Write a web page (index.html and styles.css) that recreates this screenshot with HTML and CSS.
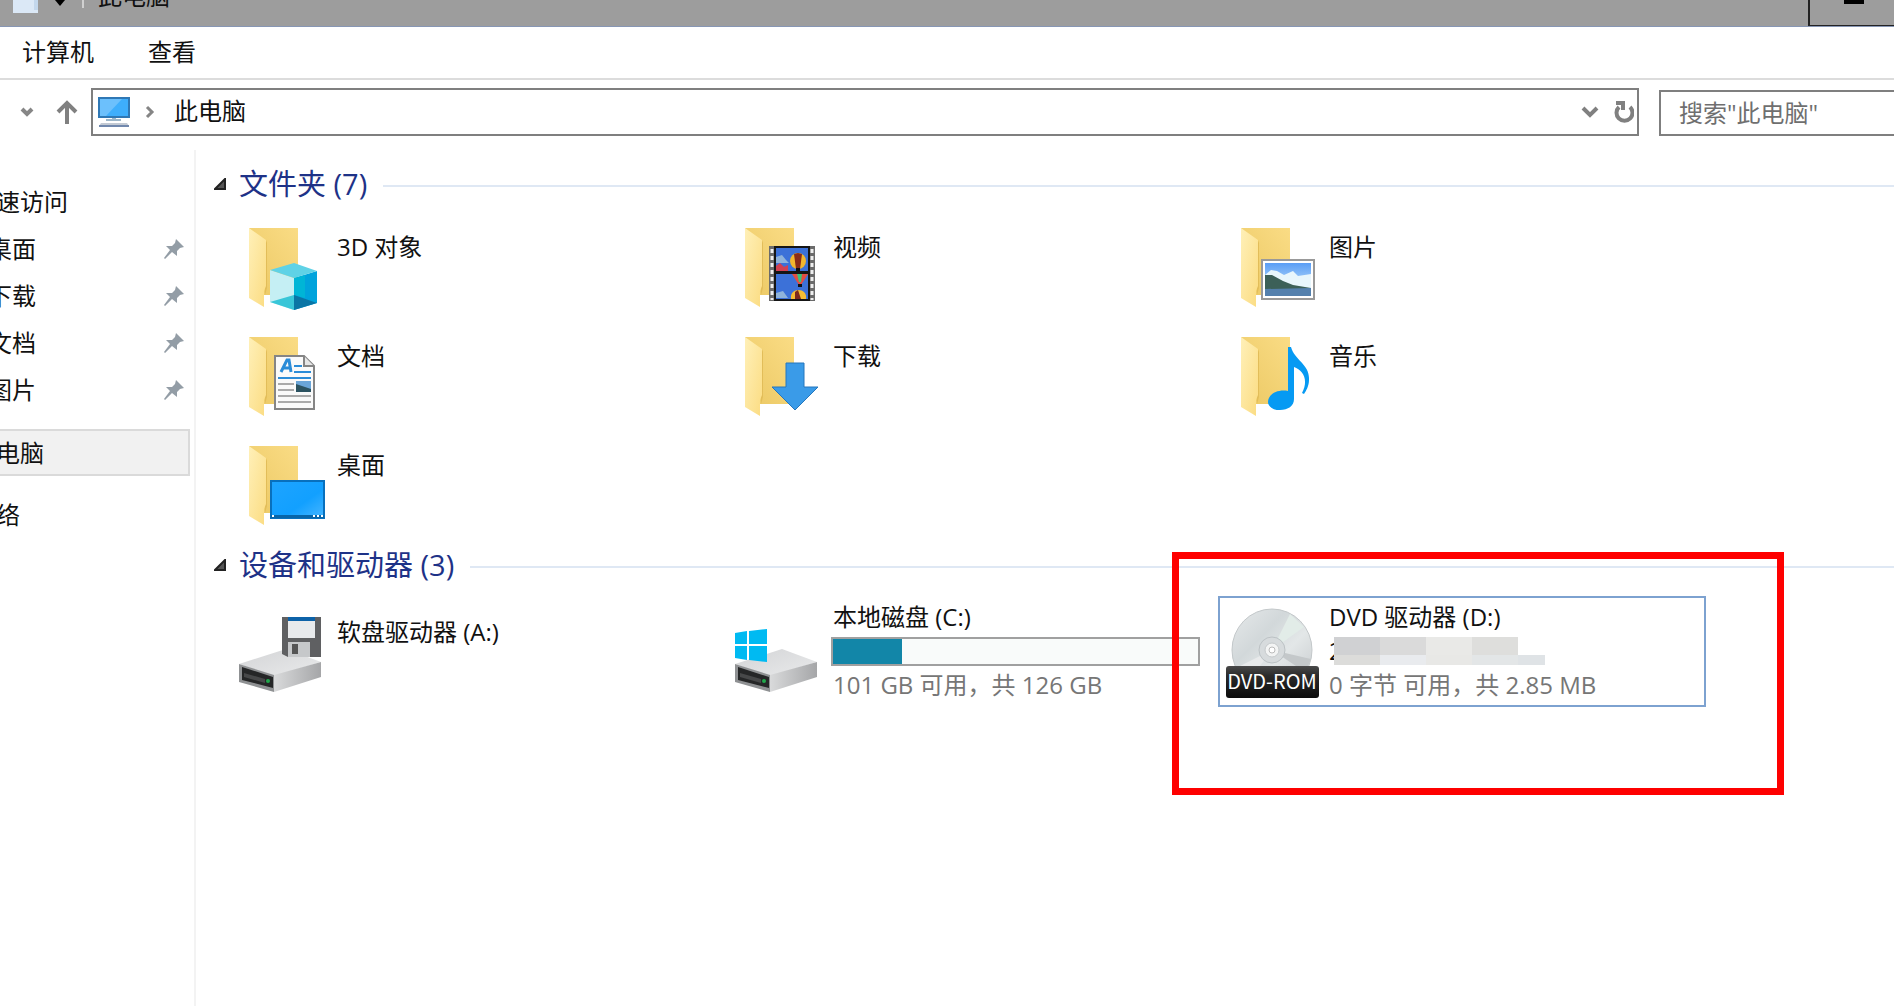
FILE: index.html
```html
<!DOCTYPE html>
<html lang="zh-CN">
<head>
<meta charset="utf-8">
<title>此电脑</title>
<link rel="stylesheet" href="styles.css">
</head>
<body>
<svg class="defs" aria-hidden="true">
  <defs>
    <linearGradient id="back" x1="0" y1="1" x2="1" y2="0"><stop offset="0" stop-color="#ebc863"/><stop offset="1" stop-color="#fadc85"/></linearGradient>
    <linearGradient id="flap" x1="0" y1="0" x2="1" y2="1"><stop offset="0" stop-color="#fff0b8"/><stop offset="1" stop-color="#fbdc82"/></linearGradient>
    <linearGradient id="top" x1="0" y1="0" x2="1" y2="1"><stop offset="0" stop-color="#d3d4d6"/><stop offset="1" stop-color="#e9eaeb"/></linearGradient>
    <linearGradient id="side" x1="0" y1="0" x2="1" y2="0"><stop offset="0" stop-color="#d9dadb"/><stop offset="1" stop-color="#a5a6a8"/></linearGradient>
    <linearGradient id="screen" x1="0" y1="0" x2="1" y2="1"><stop offset="0" stop-color="#1ea4ff"/><stop offset=".6" stop-color="#12a0ff"/><stop offset="1" stop-color="#48b6ff"/></linearGradient>
    <linearGradient id="disc" x1="0" y1="0" x2="1" y2="1"><stop offset="0" stop-color="#e6e9ea"/><stop offset=".35" stop-color="#d2d8da"/><stop offset=".6" stop-color="#e3e7e8"/><stop offset="1" stop-color="#c3c7c9"/></linearGradient>
    <linearGradient id="label" x1="0" y1="0" x2="0" y2="1"><stop offset="0" stop-color="#4a4a4a"/><stop offset=".3" stop-color="#2b2b2b"/><stop offset="1" stop-color="#0c0c0c"/></linearGradient>
    <linearGradient id="sky" x1="0" y1="0" x2="0" y2="1"><stop offset="0" stop-color="#5a9ef5"/><stop offset="1" stop-color="#d8f0fb"/></linearGradient>
    <symbol id="folder" viewBox="0 0 110 109">
      <path d="M23 10H72V77H38Z" fill="url(#back)"/>
      <path d="M40 22L41 25V70L39 77V60Z" fill="#e2bd59"/>
      <path d="M23 10L40 22V68L38 73V89L23 80Z" fill="url(#flap)"/>
    </symbol>
    <symbol id="drive" viewBox="0 0 110 109">
      <path d="M13 68L60 53L95 66L48 80Z" fill="url(#top)"/>
      <path d="M48 79L95 66V81L48 96Z" fill="url(#side)"/>
      <path d="M13 68L48 79V96L13 86Z" fill="#8f9193"/>
      <path d="M16 71L47 81V92L16 84Z" fill="#252627"/>
      <path d="M18 77L39 83V87L18 81Z" fill="#474849"/>
      <circle cx="42" cy="85" r="2" fill="#20a84b"/>
    </symbol>
    <symbol id="pin" viewBox="0 0 20 20">
      <path d="M12 0L20 8L16 9L13 12V17L8 13L1 20L0 19L6 11L2 7H8L11 4Z" fill="#939da6"/>
    </symbol>
  </defs>
</svg>

<header class="titlebar">
  <svg class="title-icon" viewBox="0 0 84 14" aria-hidden="true">
    <path d="M13 0H38V13H13Z" fill="#dbe8f6"/><path d="M34 0H38V10H34Z" fill="#c3d7ec"/>
    <path d="M55 0H65L60 6Z" fill="#000"/><path d="M83 0V8" stroke="#d0d0d0" stroke-width="2"/>
  </svg>
  <h1 class="title">此电脑</h1>
  <button class="minimize" aria-label="最小化"></button>
</header>

<nav class="menu">
  <a href="#computer">计算机</a>
  <a href="#view">查看</a>
</nav>

<div class="toolbar">
  <button class="recent" aria-label="最近"><svg width="14" height="10" viewBox="0 0 14 10"><path d="M2 2L7 7L12 2" fill="none" stroke="#868686" stroke-width="4"/></svg></button>
  <button class="up" aria-label="向上"><svg width="22" height="24" viewBox="0 0 22 24"><path d="M11 24V3M2 12L11 3L20 12" fill="none" stroke="#808080" stroke-width="4"/></svg></button>
  <div class="address">
    <svg width="32" height="32" viewBox="0 0 32 32" aria-hidden="true">
      <path d="M1 2H31V21H1Z" fill="#3eaefc" stroke="#2f78b5" stroke-width="2"/><path d="M2 3H24L8 20H2Z" fill="#6cc0fc"/>
      <path d="M14 22H18V23H23V25H8V23H14Z" fill="#9cb6c9"/><path d="M3 27H29L31 30H1Z" fill="#c3cad4"/><path d="M1 30H31" stroke="#7188ad" stroke-width="2"/>
    </svg>
    <svg class="crumb" width="10" height="14" viewBox="0 0 10 14" aria-hidden="true"><path d="M2 2L7 7L2 12" fill="none" stroke="#858585" stroke-width="3"/></svg>
    <span class="path">此电脑</span>
    <button aria-label="以前的位置"><svg width="18" height="12" viewBox="0 0 18 12"><path d="M2 2L9 9L16 2" fill="none" stroke="#808080" stroke-width="4"/></svg></button>
    <button aria-label="刷新"><svg width="20" height="22" viewBox="0 0 20 22"><path d="M5 6A8 8 0 1 0 16 6M2 2H9V9" fill="none" stroke="#808080" stroke-width="4"/></svg></button>
  </div>
  <input class="search" type="search" aria-label="搜索" placeholder='搜索"此电脑"'>
</div>

<div class="body">
  <nav class="sidebar">
    <a class="root" href="#quick">速访问</a>
    <a href="#desktop">桌面<svg><use href="#pin"/></svg></a>
    <a href="#downloads">下载<svg><use href="#pin"/></svg></a>
    <a href="#documents">文档<svg><use href="#pin"/></svg></a>
    <a href="#pictures">图片<svg><use href="#pin"/></svg></a>
    <a class="root current" href="#pc">电脑</a>
    <a class="root" href="#network">络</a>
  </nav>

  <main class="content">
    <section>
      <h2 class="group"><svg width="12" height="12" viewBox="0 0 12 12" aria-hidden="true"><path d="M1 11H11V1Z" fill="#555" stroke="#222" stroke-width="2"/></svg><span>文件夹 (7)</span></h2>
      <div class="grid">
        <a class="tile" href="#objects">
          <svg viewBox="0 0 110 109" aria-hidden="true"><use href="#folder"/>
            <path d="M44 52L68 60V92L44 84Z" fill="#c5eff4"/><path d="M68 60L91 53V85L68 92Z" fill="#00a3dc"/><path d="M68 60L79 57V80L68 77Z" fill="#00b5d6"/>
            <path d="M44 52L68 45L91 53L68 60Z" fill="#5fd2e6"/><path d="M44 84L68 77V92Z" fill="#39c6d8"/><path d="M68 77L91 85L68 92Z" fill="#0a75a5"/>
          </svg><span class="name">3D 对象</span></a>
        <a class="tile" href="#videos">
          <svg viewBox="0 0 110 109" aria-hidden="true"><use href="#folder"/>
            <path d="M47 28H93V83H47Z" fill="#6b6b6b"/><path d="M52 28H88V83H52Z" fill="#151515"/>
            <path d="M50 31V82M90 31V82" stroke="#eee" stroke-width="3" stroke-dasharray="4 3"/>
            <path d="M54 30H86V53H54ZM54 56H86V81H54Z" fill="#3c71d8"/>
            <path d="M54 39L60 37L64 42L67 45H54ZM54 75L61 73L66 80H54Z" fill="#8fb3da"/><path d="M54 48L58 45L62 49L66 47V53H54Z" fill="#d34152"/>
            <circle cx="76" cy="43" r="8" fill="#f3b72e"/><path d="M72 36L74 51H78L80 36L76 35Z" fill="#8a2c18"/><path d="M74 50H78V54H74Z" fill="#111"/>
            <path d="M70 56H86L79 67H77Z" fill="#e34d42"/><path d="M75 56H80L79 64H77Z" fill="#3bc37a"/><path d="M76 66H80V69H76Z" fill="#111"/>
            <path d="M69 81C67 69 86 69 84 81Z" fill="#f5bd33"/><path d="M73 81V74L76 72L79 81Z" fill="#7c2a1d"/>
          </svg><span class="name">视频</span></a>
        <a class="tile" href="#pictures">
          <svg viewBox="0 0 110 109" aria-hidden="true"><use href="#folder"/>
            <path d="M44 42H96V81H44Z" fill="#fff" stroke="#999" stroke-width="2"/><path d="M47 45H93V78H47Z" fill="url(#sky)"/>
            <path d="M47 57L53 52L59 53L66 57L75 53L80 58L93 56V71H47Z" fill="#e8f6fc"/>
            <path d="M47 57L54 57L65 63L75 67L93 70V73H47Z" fill="#3c6058"/><path d="M47 71L93 70V78H47Z" fill="#5480ad"/>
          </svg><span class="name">图片</span></a>
        <a class="tile" href="#documents">
          <svg viewBox="0 0 110 109" aria-hidden="true"><use href="#folder"/>
            <path d="M49 29H78L88 39V82H49Z" fill="#fafafa" stroke="#858585" stroke-width="2"/><path d="M78 29V39H88" fill="#e6e6e6" stroke="#858585" stroke-width="2"/>
            <path d="M55 45L61 33H63L65 45M58 41H64" fill="none" stroke="#2b8cd8" stroke-width="3"/>
            <path d="M68 39H76M68 45H85M52 51H85" stroke="#2b8cd8" stroke-width="2"/><path d="M52 57H68M52 63H68M52 69H85M52 75H85" stroke="#aaa" stroke-width="2"/>
            <path d="M70 54H85V65H70Z" fill="#6aa5d8"/><path d="M70 57L85 62V65H70Z" fill="#2c5361"/>
          </svg><span class="name">文档</span></a>
        <a class="tile" href="#downloads">
          <svg viewBox="0 0 110 109" aria-hidden="true"><use href="#folder"/>
            <path d="M64 36H82V60H96L73 83L50 60H64Z" fill="#3a9be8" stroke="#2477bd"/>
          </svg><span class="name">下载</span></a>
        <a class="tile" href="#music">
          <svg viewBox="0 0 110 109" aria-hidden="true"><use href="#folder"/>
            <path d="M70 20H73C77 34 92 37 91 53C91 59 88 64 86 67L84 66C91 53 85 43 76 40V72C76 79 70 83 62 83C54 83 50 79 50 75C50 67 60 62 70 64Z" fill="#069af3"/>
          </svg><span class="name">音乐</span></a>
        <a class="tile" href="#desktop">
          <svg viewBox="0 0 110 109" aria-hidden="true"><use href="#folder"/>
            <path d="M45 45H98V82H45Z" fill="url(#screen)" stroke="#0870bd" stroke-width="2"/><path d="M45 79H98V82H45Z" fill="#0865a8"/>
            <path d="M46 80H48M87 80H89M91 80H93M95 80H97" stroke="#fff" stroke-width="2"/>
          </svg><span class="name">桌面</span></a>
      </div>
    </section>

    <section>
      <h2 class="group"><svg width="12" height="12" viewBox="0 0 12 12" aria-hidden="true"><path d="M1 11H11V1Z" fill="#555" stroke="#222" stroke-width="2"/></svg><span>设备和驱动器 (3)</span></h2>
      <div class="grid devices">
        <a class="tile" href="#a">
          <svg viewBox="0 0 110 109" aria-hidden="true"><use href="#drive"/>
            <path d="M56 21H95V61H62L56 58Z" fill="#5f6062"/><path d="M62 21H89V25H62Z" fill="#0d62a8"/><path d="M62 25H89V42H62Z" fill="#e8eaec"/>
            <path d="M62 46H84V61H62Z" fill="#c6c8ca"/><path d="M66 48H72V58H66Z" fill="#555"/>
          </svg><span class="name floppy">软盘驱动器 (A:)</span></a>
        <a class="tile" href="#c">
          <svg viewBox="0 0 110 109" aria-hidden="true"><use href="#drive"/>
            <path d="M13 37L25 35V48H13ZM27 35L45 33V48H27ZM13 50H25V64L13 62ZM27 50H45V66L27 64Z" fill="#00baf2"/>
          </svg>
          <span class="info"><span>本地磁盘 (C:)</span><progress max="100" value="19" aria-label="已用空间"></progress><span class="sub">101 GB 可用，共 126 GB</span></span></a>
        <a class="tile selected" href="#d">
          <svg viewBox="0 0 110 109" aria-hidden="true">
            <ellipse cx="54" cy="54" rx="40" ry="41" fill="url(#disc)" stroke="#c3c8ca"/>
            <path d="M54 54L72 18L86 31Z" fill="#e2ece8"/><path d="M54 54L18 72L30 86Z" fill="#e8eaeb"/><path d="M54 54L93 63L87 76Z" fill="#c4c8ca"/>
            <circle cx="54" cy="54" r="13" fill="#d7dbdd" stroke="#bcc2c5"/><circle cx="54" cy="54" r="7" fill="#f3f4f4" stroke="#c5c9cb"/><circle cx="54" cy="54" r="3" fill="#fff" stroke="#bbb"/>
            <rect x="8" y="70" width="93" height="32" rx="3" fill="url(#label)"/>
            <text class="rom" x="54" y="93" text-anchor="middle">DVD-ROM</text>
          </svg>
          <span class="info"><span>DVD 驱动器 (D:)</span>
            <span class="volume">2<span class="mosaic"><i></i><i></i><i></i><i></i><i></i><i></i><i></i><i></i><i></i></span></span>
            <span class="sub">0 字节 可用，共 2.85 MB</span></span>
          <span class="callout"></span></a>
      </div>
    </section>
  </main>
</div>
</body>
</html>
```
FILE: styles.css
```css
* { box-sizing: border-box; }

body {
  margin: 0;
  min-height: 100vh;
  display: flex;
  flex-direction: column;
  overflow: hidden;
  background: #fff;
  color: #111;
  font: 24px/28px "Open Sans", "Noto Sans CJK SC", sans-serif;
}

a { color: inherit; text-decoration: none; }
button { padding: 0; border: 0; background: none; display: flex; align-items: center; }
.defs { position: absolute; width: 0; height: 0; }

.titlebar {
  display: flex;
  height: 27px;
  overflow: hidden;
  background: #9d9d9d;
  border-bottom: 1px solid #8796b4;
}
.title-icon { width: 84px; height: 14px; margin-right: 14px; }
.title { flex: 1; margin: -18px 0 0; font-size: 24px; font-weight: 400; }
.minimize {
  width: 86px;
  height: 27px;
  border: solid #222;
  border-width: 0 0 2px 2px;
  padding-left: 34px;
  align-items: flex-start;
}
.minimize::before { content: ""; width: 20px; height: 4px; background: #000; }

.menu {
  display: flex;
  align-items: center;
  gap: 54px;
  height: 53px;
  padding: 0 22px 2px;
  border-bottom: 2px solid #dcdcdc;
}

.toolbar { display: flex; align-items: center; height: 64px; }
.recent { margin: 0 22px 0 20px; }
.up { margin-right: 13px; }
.address {
  flex: 1;
  display: flex;
  align-items: center;
  height: 48px;
  padding: 0 3px 0 5px;
  border: 2px solid #7f7f7f;
}
.crumb { margin: 0 19px 0 15px; }
.path { flex: 1; padding-bottom: 2px; }
.address button { margin-left: 15px; }
.search {
  width: 235px;
  height: 46px;
  margin: 2px 0 0 20px;
  padding: 0 18px 2px;
  border: 2px solid #7f7f7f;
  border-right: 0;
  border-radius: 0;
  font: inherit;
  outline: 0;
  appearance: none;
}
.search::placeholder { color: #6f6f6f; opacity: 1; }

.body { flex: 1; display: flex; padding-top: 6px; }

.sidebar {
  width: 196px;
  padding: 28px 4px 0 0;
  border-right: 2px solid #f3f3f3;
  overflow: hidden;
}
.sidebar a {
  display: flex;
  align-items: center;
  justify-content: space-between;
  height: 47px;
  margin-left: -12px;
  padding-right: 6px;
}
.sidebar a.root { margin-left: -4px; }
.sidebar svg { width: 20px; height: 20px; }
.sidebar .current {
  margin: 16px 0 15px -4px;
  background: #f1f1f1;
  border: 2px solid #dadada;
  border-left: 0;
}

.content { flex: 1; min-width: 0; padding: 14px 0 0 18px; }
.group {
  display: flex;
  align-items: center;
  height: 44px;
  margin: 0;
  color: #1e3287;
  font-size: 29px;
  font-weight: 400;
}
.group span { padding-bottom: 4px; }
.group svg { margin: 0 13px 4px 0; }
.group::after { content: ""; flex: 1; height: 2px; margin-left: 16px; background: #dfe8f4; }

.grid {
  display: grid;
  grid-template-columns: repeat(auto-fill, 488px);
  grid-auto-rows: 109px;
  column-gap: 8px;
  margin-left: 12px;
  padding-top: 10px;
}
.devices { grid-auto-rows: 111px; padding-top: 7px; }
.tile { position: relative; display: flex; }
.tile > svg { flex: none; width: 110px; height: 109px; margin-right: 1px; }
.name { padding-top: 15px; }
.name.floppy { padding-top: 22px; }

.info { flex: 1; display: flex; flex-direction: column; padding: 7px 10px 0 0; }
.sub { color: #767676; }
progress {
  display: block;
  width: calc(100% + 2px);
  height: 29px;
  margin: 6px 0 5px -2px;
  border: 2px solid #a0a0a0;
  background: #f9fbfa;
  appearance: none;
}
progress::-webkit-progress-bar { background: #f9fbfa; }
progress::-webkit-progress-value { background: #1286a8; }

.selected { outline: 2px solid #7da2d0; outline-offset: -2px; }
.volume { position: relative; height: 28px; margin: 6px 0; }
.mosaic {
  position: absolute;
  left: 5px;
  top: 0;
  display: grid;
  grid-template-columns: repeat(4, 46px) 27px;
  grid-template-rows: 18px 10px;
}
.mosaic i { background: #dadada; }
.mosaic i:nth-child(1) { background: #d0d1d3; }
.mosaic i:nth-child(3) { background: #e9e9e7; }
.mosaic i:nth-child(4) { background: #dededc; }
.mosaic i:nth-child(5) { grid-area: 2 / 1; background: #dcdcda; }
.mosaic i:nth-child(6) { grid-area: 2 / 2; background: #e9ebee; }
.mosaic i:nth-child(7) { grid-area: 2 / 3; background: #e8e8e6; }
.mosaic i:nth-child(8) { grid-area: 2 / 4; background: #e3e6e7; }
.mosaic i:nth-child(9) { grid-area: 2 / 5; background: #dfe3e6; }
.rom { fill: #fff; font: 20px "Noto Sans CJK SC", sans-serif; }

.callout {
  position: absolute;
  inset: -44px -78px -88px -46px;
  border: 7px solid #fe0000;
  pointer-events: none;
}
```
